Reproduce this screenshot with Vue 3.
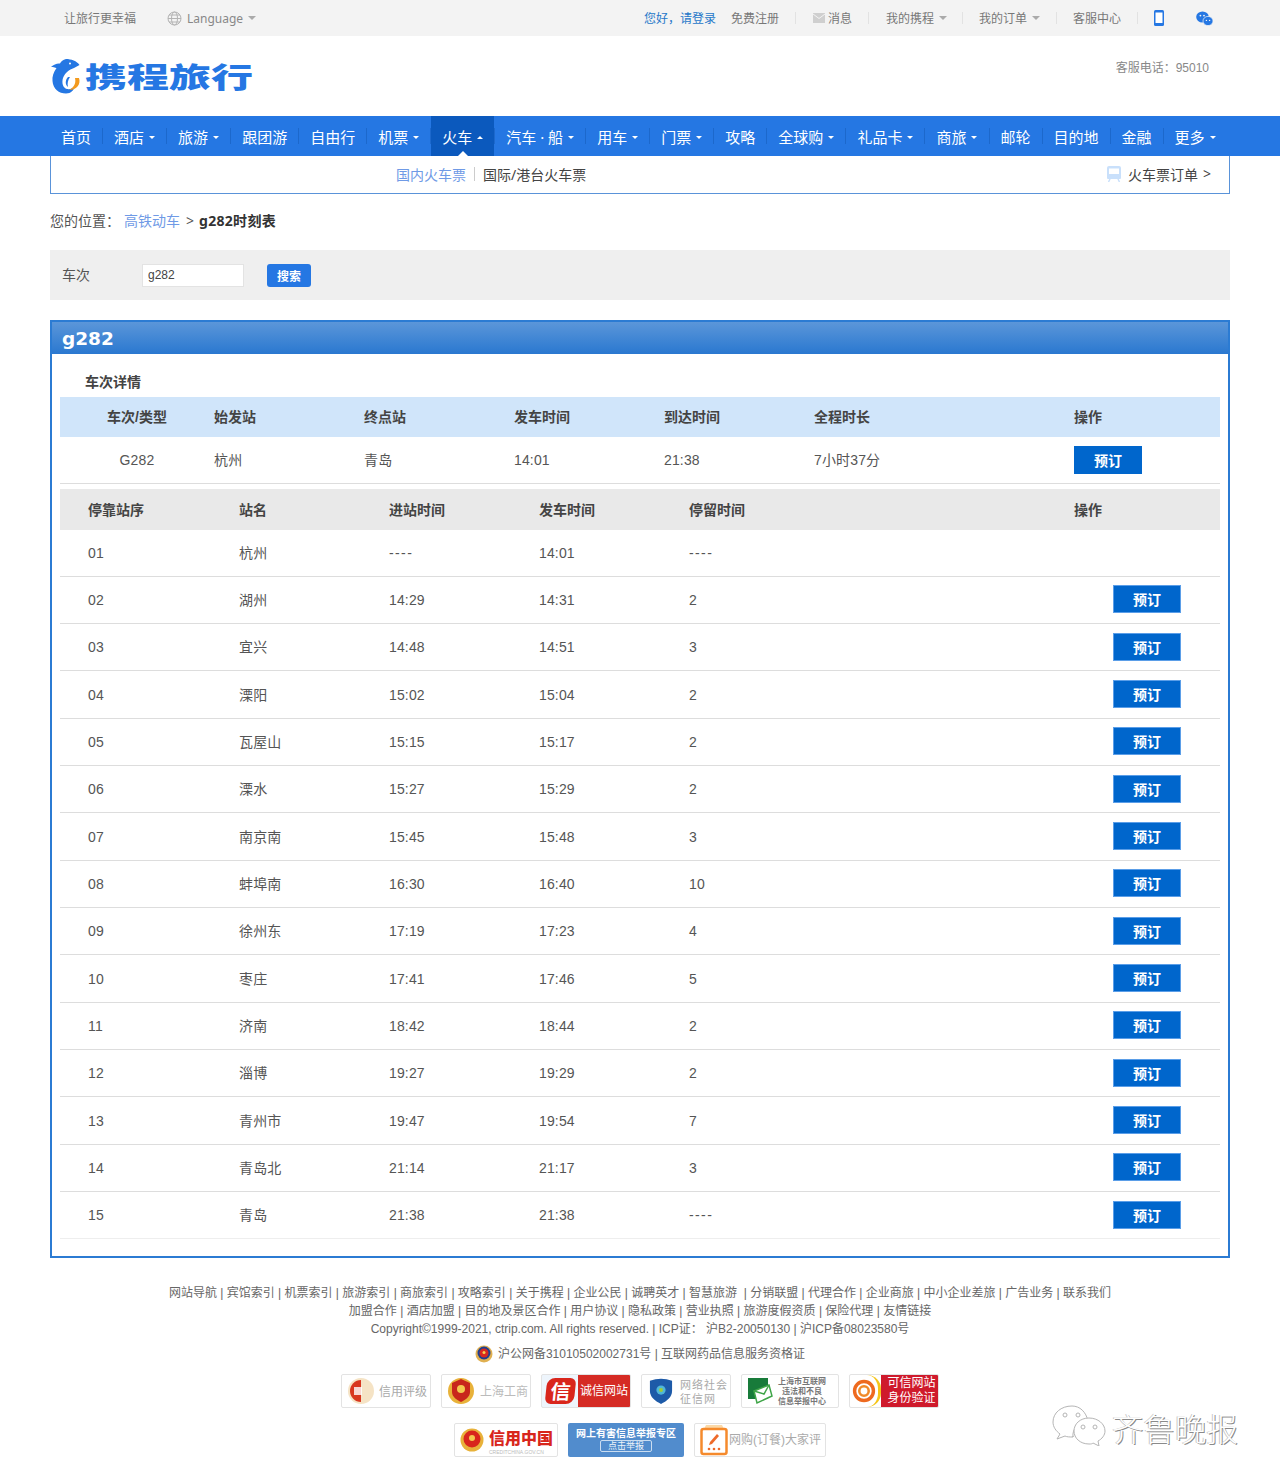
<script setup>
const nav = [
  { t: '首页' }, { t: '酒店', c: 1 }, { t: '旅游', c: 1 }, { t: '跟团游' }, { t: '自由行' }, { t: '机票', c: 1 },
  { t: '火车', c: 1, a: 1 }, { t: '汽车 · 船', c: 1 }, { t: '用车', c: 1 }, { t: '门票', c: 1 }, { t: '攻略' },
  { t: '全球购', c: 1 }, { t: '礼品卡', c: 1 }, { t: '商旅', c: 1 }, { t: '邮轮' }, { t: '目的地' }, { t: '金融' }, { t: '更多', c: 1 }
]
const stops = [
  ['01', '杭州', '----', '14:01', '----', 0],
  ['02', '湖州', '14:29', '14:31', '2', 1],
  ['03', '宜兴', '14:48', '14:51', '3', 1],
  ['04', '溧阳', '15:02', '15:04', '2', 1],
  ['05', '瓦屋山', '15:15', '15:17', '2', 1],
  ['06', '溧水', '15:27', '15:29', '2', 1],
  ['07', '南京南', '15:45', '15:48', '3', 1],
  ['08', '蚌埠南', '16:30', '16:40', '10', 1],
  ['09', '徐州东', '17:19', '17:23', '4', 1],
  ['10', '枣庄', '17:41', '17:46', '5', 1],
  ['11', '济南', '18:42', '18:44', '2', 1],
  ['12', '淄博', '19:27', '19:29', '2', 1],
  ['13', '青州市', '19:47', '19:54', '7', 1],
  ['14', '青岛北', '21:14', '21:17', '3', 1],
  ['15', '青岛', '21:38', '21:38', '----', 1]
]
const line1 = ['网站导航', '宾馆索引', '机票索引', '旅游索引', '商旅索引', '攻略索引', '关于携程', '企业公民', '诚聘英才', '智慧旅游 ', '分销联盟', '代理合作', '企业商旅', '中小企业差旅', '广告业务', '联系我们'].join(' | ')
const line2 = ['加盟合作', '酒店加盟', '目的地及景区合作', '用户协议', '隐私政策', '营业执照', '旅游度假资质', '保险代理', '友情链接'].join(' | ')
</script>

<template>
  <div class="page">
    <div class="topbar">
      <div class="top-left">
        <span>让旅行更幸福</span>
        <span class="lang">
          <svg width="15" height="15" viewBox="0 0 15 15" fill="none" stroke="#b4b4b4" stroke-width="1"><circle cx="7.5" cy="7.5" r="6.5"/><ellipse cx="7.5" cy="7.5" rx="3" ry="6.5"/><path d="M1 7.5h13M2 4h11M2 11h11"/></svg>
          <span class="lang-t">Language</span><i class="tri"></i>
        </span>
      </div>
      <div class="top-right">
        <span class="blue hello">您好，请登录</span>
        <span class="reg">免费注册</span>
        <i class="sep"></i>
        <span class="msg"><svg width="12" height="10" viewBox="0 0 12 10"><rect width="12" height="10" fill="#cfcfcf"/><path d="M0 1l6 4.5L12 1" fill="none" stroke="#f3f3f3" stroke-width="1"/></svg>消息</span>
        <i class="sep sep-w"></i>
        <span class="has-tri">我的携程<i class="tri"></i></span>
        <i class="sep sep-n"></i>
        <span class="has-tri">我的订单<i class="tri"></i></span>
        <i class="sep"></i>
        <span>客服中心</span>
        <i class="sep"></i>
        <svg class="phone" width="10" height="16" viewBox="0 0 10 16"><rect width="10" height="16" rx="1.5" fill="#2577e3"/><rect x="1.5" y="2.5" width="7" height="10.5" fill="#fff"/></svg>
        <svg class="wechat" width="17" height="15" viewBox="0 0 17 15"><ellipse cx="6.5" cy="6" rx="6.3" ry="5.6" fill="#2577e3"/><ellipse cx="12" cy="10" rx="5" ry="4.6" fill="#2577e3" stroke="#f3f3f3" stroke-width=".7"/><circle cx="4.4" cy="4.6" r=".9" fill="#f3f3f3"/><circle cx="8" cy="4.6" r=".9" fill="#f3f3f3"/><circle cx="10.4" cy="9.4" r=".7" fill="#f3f3f3"/><circle cx="13.6" cy="9.4" r=".7" fill="#f3f3f3"/></svg>
      </div>
    </div>

    <div class="header">
      <div class="logo">
        <svg width="32" height="36" viewBox="0 0 32 36">
          <path d="M16 1C21 1 27 3 29.500 7L24 10C19 11.500 15 15 13 20C11.500 25 13 30 17 31C20 31.500 23 30.500 25 28C24 32 21 35.500 16 35.500C9 35.500 3 31 2.500 23C2 19 3.500 14 6.500 10C5 9.500 3 9 1 9C4 6.500 7 5 10 5.500C11 3.500 13 1.500 16 1Z" fill="#2577e3"/>
          <path d="M25 20L29 20C31 26 27 32 19 32C23 30 26.500 26 25 20Z" fill="#f39a1e"/>
          <path d="M18 19C15 22 15 27 18 29C17 25 18 22 20 19Z" fill="#2577e3"/>
          <circle cx="20" cy="5.500" r="1" fill="#fff"/>
        </svg>
        <span class="logo-t">携程旅行</span>
      </div>
      <div class="tel">客服电话：95010</div>
    </div>

    <div class="nav">
      <template v-for="(n, i) in nav" :key="n.t">
        <i v-if="i" class="nav-sep"></i>
        <span class="nav-item" :class="{ active: n.a }">{{ n.t }}<i v-if="n.c" class="caret" :class="{ up: n.a }"></i></span>
      </template>
    </div>

    <div class="subbar">
      <div class="tabs">
        <span class="link">国内火车票</span><i class="tab-sep"></i><span>国际/港台火车票</span>
      </div>
      <div class="orders">
        <svg width="14" height="16" viewBox="0 0 14 16"><path d="M2 0h10a2 2 0 0 1 2 2v10a1 1 0 0 1-1 1H1a1 1 0 0 1-1-1V2a2 2 0 0 1 2-2z" fill="#c9e0fb"/><rect x="2" y="2.500" width="10" height="5.500" fill="#fff"/><path d="M3 13l-1.500 3M11 13l1.500 3" stroke="#c9e0fb" stroke-width="1.500"/></svg>
        <span>火车票订单</span><span class="gt">&gt;</span>
      </div>
    </div>

    <div class="crumb">
      <span>您的位置：</span><span class="link c1">高铁动车</span><span class="c2">&gt;</span><b>g282时刻表</b>
    </div>

    <div class="search">
      <span class="s-label">车次</span>
      <input class="s-input" value="g282" />
      <button class="s-btn">搜索</button>
    </div>

    <div class="panel">
      <div class="panel-head">g282</div>
      <div class="panel-body">
        <div class="detail-title">车次详情</div>
        <div class="grid-a head-a">
          <span class="center">车次/类型</span><span>始发站</span><span>终点站</span><span>发车时间</span><span>到达时间</span><span>全程时长</span><span>操作</span>
        </div>
        <div class="grid-a row-a">
          <span class="center">G282</span><span class="cjk">杭州</span><span class="cjk">青岛</span><span>14:01</span><span>21:38</span><span class="cjk">7小时37分</span><span><button class="book">预订</button></span>
        </div>
        <div class="grid-b head-b">
          <span>停靠站序</span><span>站名</span><span>进站时间</span><span>发车时间</span><span>停留时间</span><span>操作</span>
        </div>
        <div v-for="s in stops" :key="s[0]" class="grid-b row-b">
          <span>{{ s[0] }}</span><span class="cjk">{{ s[1] }}</span>
          <span :class="{ dash: s[2] === '----' }">{{ s[2] }}</span><span>{{ s[3] }}</span>
          <span :class="{ dash: s[4] === '----' }">{{ s[4] }}</span>
          <span class="op"><button v-if="s[5]" class="book">预订</button></span>
        </div>
      </div>
    </div>

    <div class="footer">
      <div class="f-line">{{ line1 }}</div>
      <div class="f-line">{{ line2 }}</div>
      <div class="f-line">Copyright©1999-2021, ctrip.com. All rights reserved. | ICP证： 沪B2-20050130 | 沪ICP备08023580号</div>
      <div class="f-police">
        <svg width="18" height="20" viewBox="0 0 18 20"><circle cx="9" cy="10" r="8.500" fill="#e0b050"/><circle cx="9" cy="9" r="6.500" fill="#1f3f8f"/><circle cx="9" cy="9" r="4.500" fill="#d8281e"/><circle cx="9" cy="8.500" r="1.500" fill="#f5cf55"/></svg>
        <span>沪公网备31010502002731号 | 互联网药品信息服务资格证</span>
      </div>
      <div class="badges b1">
        <div class="badge w90 b-tight">
          <svg width="28" height="28" viewBox="0 0 28 28"><circle cx="14" cy="14" r="13" fill="#f5e3c5"/><path d="M14 3a11 11 0 0 0 0 22z" fill="#d8361f"/><rect x="7" y="10" width="8" height="8" fill="#fff" opacity=".8"/></svg>
          <span class="serif">信用评级</span>
        </div>
        <div class="badge w90">
          <svg width="28" height="30" viewBox="0 0 28 30"><circle cx="14" cy="15" r="13" fill="#e8b23a"/><path d="M14 3l9 4v9c0 5-5 8-9 10-4-2-9-5-9-10V7z" fill="#c8261c"/><circle cx="14" cy="13" r="4" fill="#f3c94f"/></svg>
          <span class="serif pale">上海工商</span>
        </div>
        <div class="badge w90 red-b">
          <span class="xin"><span>信</span></span>
          <span class="red-t">诚信网站</span>
        </div>
        <div class="badge w90 shield">
          <svg width="24" height="28" viewBox="0 0 26 28"><path d="M1 3c8-3 16-3 24 0v11c0 7-6 11-12 14C7 25 1 21 1 14z" fill="#1d5aa8"/><circle cx="13" cy="13" r="5" fill="#4fb6d8"/><circle cx="13" cy="13" r="2.200" fill="#9ccb3b"/></svg>
          <span class="serif two">网络社会<br />征信网</span>
        </div>
        <div class="badge w98">
          <svg width="26" height="28" viewBox="0 0 26 28"><rect x="1" y="1" width="20" height="21" fill="#187b3a"/><path d="M7 14l15-6 3 11-15 7z" fill="#fff" stroke="#3fa548" stroke-width="1.500"/><path d="M7 14l10 3 5-9" fill="none" stroke="#3fa548" stroke-width="1.500"/></svg>
          <span class="mini">上海市互联网<br />违法和不良<br />信息举报中心</span>
        </div>
        <div class="badge w90 kx">
          <span class="kx-l"><svg width="24" height="24" viewBox="0 0 28 28" fill="none"><circle cx="14" cy="14" r="11" stroke="#ee6a1f" stroke-width="4"/><circle cx="14" cy="14" r="5.500" stroke="#f08a2a" stroke-width="3"/></svg></span>
          <span class="kx-r">可信网站<br />身份验证</span>
        </div>
      </div>
      <div class="badges b2">
        <div class="badge w104">
          <svg width="24" height="26" viewBox="0 0 24 26"><circle cx="12" cy="13" r="11.500" fill="#e8b23a"/><circle cx="12" cy="12" r="8.500" fill="#d8261c"/><circle cx="12" cy="11" r="3" fill="#f3c94f"/></svg>
          <span class="cc"><b>信用中国</b><small>CREDITCHINA.GOV.CN</small></span>
        </div>
        <div class="badge-blue"><b>网上有害信息举报专区</b><span>点击举报</span></div>
        <div class="badge w132">
          <svg width="28" height="32" viewBox="0 0 28 32"><path d="M6 1h16l2 4H4z" fill="#fbd9a8"/><rect x="1.500" y="5" width="25" height="25" rx="2" fill="#fff" stroke="#f58a2c" stroke-width="2.500"/><path d="M10 18l7-8 2 2-7 8-3 1z" fill="#ee6a2a"/><circle cx="9" cy="25" r="1.300" fill="#ee6a2a"/><circle cx="14" cy="25" r="1.300" fill="#ee6a2a"/><circle cx="19" cy="25" r="1.300" fill="#ee6a2a"/></svg>
          <span class="eval">网购(订餐)大家评</span>
        </div>
      </div>
      <div class="mark">
        <svg width="54" height="42" viewBox="0 0 54 42" fill="#fff" stroke="#b5b5b5" stroke-width="1">
          <path d="M20 2C9 2 1 9 1 18c0 5 3 9 7 12l-3 5 8-3c2 1 5 1 8 1 0-1 0-1 0 0-1-8 5-15 15-16C34 8 28 2 20 2z"/>
          <path d="M37 14c-9 0-15 6-15 13s6 13 15 13c2 0 3 0 4-1l6 3-1-5c4-2 7-6 7-10 0-7-7-13-16-13z"/>
          <circle cx="13" cy="11" r="2"/><circle cx="26" cy="11" r="2"/><circle cx="31" cy="23" r="2"/><circle cx="43" cy="23" r="2"/>
        </svg>
        <span>齐鲁晚报</span>
      </div>
    </div>
  </div>
</template>

<style>
body { margin: 0; background: #fff; }
</style>

<style scoped>
.page { position: relative; width: 1280px; height: 1482px; overflow: hidden; font-family: "Noto Sans", "Noto Sans CJK SC", sans-serif; font-size: 14px; color: #555; background: #fff; }
i { display: block; font-style: normal; }

.topbar { height: 36px; background: #f3f3f3; display: flex; justify-content: space-between; align-items: center; padding: 0 67px 0 64px; font-size: 12px; color: #777; box-sizing: border-box; }
.top-left { display: flex; align-items: center; gap: 31px; }
.lang { display: flex; align-items: center; }
.lang svg { margin-right: 5px; }
.lang-t { font-size: 12px; color: #888; }
.tri { display: inline-block; width: 0; height: 0; border: 4px solid transparent; border-top-color: #aaa; border-bottom-width: 0; margin-left: 5px; }
.top-right { display: flex; align-items: center; }
.blue { color: #2577c9; }
.reg { margin-left: 15px; }
.sep { width: 1px; height: 12px; background: #e2e2e2; margin: 0 16px; }
.sep-w { margin-right: 17px; }
.sep-n { margin-left: 15px; }
.msg { display: flex; align-items: center; margin-left: 1px; gap: 3px; }
.has-tri { display: flex; align-items: center; }
.wechat { margin-left: 32px; }

.header { height: 80px; position: relative; display: flex; justify-content: space-between; padding: 0 71px 0 50px; }
.logo { display: flex; align-items: center; height: 78px; margin-top: 1px; }
.logo-t { display: inline-block; margin-left: 3px; font-family: "Noto Sans CJK SC", sans-serif; font-weight: 900; font-size: 28px; line-height: 40px; color: #2577e3; transform: scaleX(1.5); transform-origin: left center; white-space: nowrap; }
.tel { font: 12px/16px "Liberation Sans", "Noto Sans CJK SC", sans-serif; color: #888; margin-top: 24px; }

.nav { height: 40px; background: #2577e3; display: flex; align-items: stretch; padding-left: 50px; color: #fff; font-size: 15px; }
.nav-item { display: flex; align-items: center; padding: 0 11px; white-space: nowrap; position: relative; }
.nav-item.active { background: #0b59bd; }
.nav-item.active::after { content: ""; position: absolute; left: 50%; bottom: 0; margin-left: -5px; border: 5px solid transparent; border-bottom-color: #fff; border-top-width: 0; }
.nav-sep { width: 1px; height: 16px; margin-top: 12px; background: #1c68cc; }
.caret { width: 0; height: 0; border: 3px solid transparent; border-top-color: #fff; border-bottom-width: 0; margin-left: 5px; margin-right: .05px; margin-top: 2px; }
.caret.up { border-top-width: 0; border-bottom-width: 3px; border-top-color: transparent; border-bottom-color: #fff; }

.subbar { margin: 0 50px; height: 38px; box-sizing: border-box; border: 1px solid #5a93d9; border-top: 0; position: relative; display: flex; justify-content: flex-end; align-items: center; color: #444; padding: 0 18px 2px 0; }
.tabs { position: absolute; left: 345px; top: 0; height: 35px; display: flex; align-items: center; }
.link { color: #6f9ae6; }
.tab-sep { width: 1px; height: 14px; background: #ccc; margin: 0 8px; }
.orders { display: flex; align-items: center; }
.orders span { margin-left: 7px; }
.orders .gt { margin-left: 5px; }

.crumb { margin: 17px 50px 0; height: 20px; line-height: 20px; color: #555; display: flex; }
.c1 { margin-left: 4px; }
.c2 { margin: 0 5px 0 6px; }
.crumb b { color: #333; letter-spacing: .3px; }

.search { margin: 19px 50px 0; height: 50px; background: #efefef; display: flex; align-items: center; padding-left: 12px; }
.s-label { width: 80px; color: #555; margin-top: -2px; }
.s-input { width: 102px; height: 23px; box-sizing: border-box; border: 1px solid #e3e3e3; background: #fff; padding: 0 5px; font: 12px "Liberation Sans", sans-serif; color: #444; outline: 0; }
.s-btn { margin-left: 23px; width: 44px; height: 23px; border: 0; border-radius: 3px; background: #2577e3; color: #fff; font: bold 12px "Noto Sans CJK SC", sans-serif; padding: 0; }

.panel { margin: 20px 50px 0; height: 938px; box-sizing: border-box; border: 2px solid #2b7bd3; }
.panel-head { height: 32px; padding-left: 10px; color: #fff; font: bold 18.5px/34px "DejaVu Sans", sans-serif; background: linear-gradient(#5b96d9, #2a78d0); }
.panel-body { padding: 0 8px; font-family: "Liberation Sans", "Noto Sans CJK SC", sans-serif; letter-spacing: .15px; }
.detail-title { padding: 14px 0 0 25px; height: 29px; line-height: 29px; font-weight: 700; color: #444; letter-spacing: 0; }
.grid-a, .grid-b { display: grid; align-items: center; }
.grid-a { grid-template-columns: 154px 150px 150px 150px 150px 260px 146px; }
.grid-b { grid-template-columns: 179px 150px 150px 150px 385px 146px; }
.grid-b > span:first-child { padding-left: 28px; }
.center { text-align: center; }
.head-a { height: 40px; background: #d0e5fa; font-weight: 700; color: #444; letter-spacing: 0; }
.head-a > span { margin-bottom: 2px; }
.cjk { margin-bottom: 2px; }
.row-a { height: 47px; box-sizing: border-box; border-bottom: 1px solid #ddd; }
.head-b { height: 40.5px; margin-top: 5px; background: #e9e9e9; font-weight: 700; color: #444; letter-spacing: 0; }
.row-b { height: 47.33px; box-sizing: border-box; border-bottom: 1px solid #ddd; }
.row-b:last-child { border-bottom-color: #eee; }
.dash { letter-spacing: 1.4px; }
.op { text-align: center; margin-bottom: 1px; }
.book { display: inline-block; vertical-align: middle; width: 68px; height: 28px; padding: 0; border: 0; background: #0066cc; color: #fff; font: bold 14px "Noto Sans CJK SC", sans-serif; }
.op .book { border: 1px solid #5b9ee8; box-sizing: border-box; }

.footer { position: relative; margin-top: 26px; height: 198px; text-align: center; font: 12px/18px "Liberation Sans", "Noto Sans CJK SC", sans-serif; color: #666; }
.f-line { height: 18px; white-space: pre; }
.f-police { display: flex; justify-content: center; align-items: center; gap: 5px; margin-top: 6px; height: 20px; }
.badges { display: flex; justify-content: center; gap: 10px; }
.b1 { margin-top: 10px; height: 34px; }
.b2 { margin-top: 15px; height: 34px; }
.badge { box-sizing: border-box; height: 34px; border: 1px solid #e3e3e3; border-radius: 2px; display: flex; align-items: center; padding-left: 5px; gap: 5px; color: #aaa; overflow: hidden; background: #fff; }
.b-tight { gap: 4px; }
.w90 { width: 90px; }
.w98 { width: 98px; }
.w104 { width: 104px; }
.w132 { width: 132px; }
.serif { font: 12px/14px "Noto Sans CJK SC", serif; color: #a9a9a9; text-align: center; }
.pale { color: #bbb; }
.shield { padding-left: 7px; gap: 7px; }
.two { font-size: 11px; line-height: 14px; letter-spacing: 1px; text-align: left; white-space: nowrap; }
.red-b { padding: 0; gap: 0; background: #eef5fc; }
.xin { width: 36px; height: 32px; display: flex; align-items: center; justify-content: center; }
.xin span { display: block; width: 29px; height: 26px; text-align: center; background: #d9261c; border-radius: 8px 6px 8px 6px; color: #fff; font: bold 20px/26px "Noto Sans CJK SC", sans-serif; transform: skewX(-6deg); }
.red-t { flex: 1; height: 32px; line-height: 32px; background: #d52b24; color: #fff; font-size: 12px; white-space: nowrap; }
.mini { font: bold 8px/10px "Noto Sans CJK SC", sans-serif; color: #777; text-align: center; white-space: nowrap; }
.kx { padding: 0; gap: 0; }
.kx-l { width: 31px; height: 32px; display: flex; align-items: center; justify-content: center; border-right: 3px solid #f5c518; border-radius: 0 14px 14px 0; box-sizing: border-box; }
.kx-r { flex: 1; height: 32px; background: #cf1a2c; color: #fff; font-size: 12px; line-height: 15px; padding: 1px 0 0 4px; box-sizing: border-box; white-space: nowrap; }
.cc { display: flex; flex-direction: column; align-items: flex-start; margin-top: 3px; }
.cc b { font: 900 16px/18px "Noto Sans CJK SC", sans-serif; color: #d8261c; }
.cc small { font-size: 5px; line-height: 6px; margin-top: 3px; color: #bbb; white-space: nowrap; }
.badge-blue { box-sizing: border-box; width: 116px; height: 34px; background: #518ccd; color: #fff; border-radius: 2px; display: flex; flex-direction: column; align-items: center; }
.badge-blue b { font: bold 10px/15px "Noto Sans CJK SC", sans-serif; margin-top: 2px; white-space: nowrap; }
.badge-blue span { font-size: 9px; line-height: 10px; border: 1px solid #d8e6f5; border-radius: 2px; padding: 0 7px; opacity: .9; }
.eval { color: #aaa; font-size: 12px; white-space: nowrap; margin-left: -4px; }
.mark { position: absolute; left: 1052px; top: 120px; display: flex; align-items: center; gap: 6px; }
.mark svg { margin-bottom: 4px; }
.mark span { font: 300 31.5px/40px "Noto Sans CJK SC", sans-serif; color: #fff; text-shadow: 1px 1px 0 #8a8a8a, -1px 0 0 #c8c8c8; white-space: nowrap; }
</style>
